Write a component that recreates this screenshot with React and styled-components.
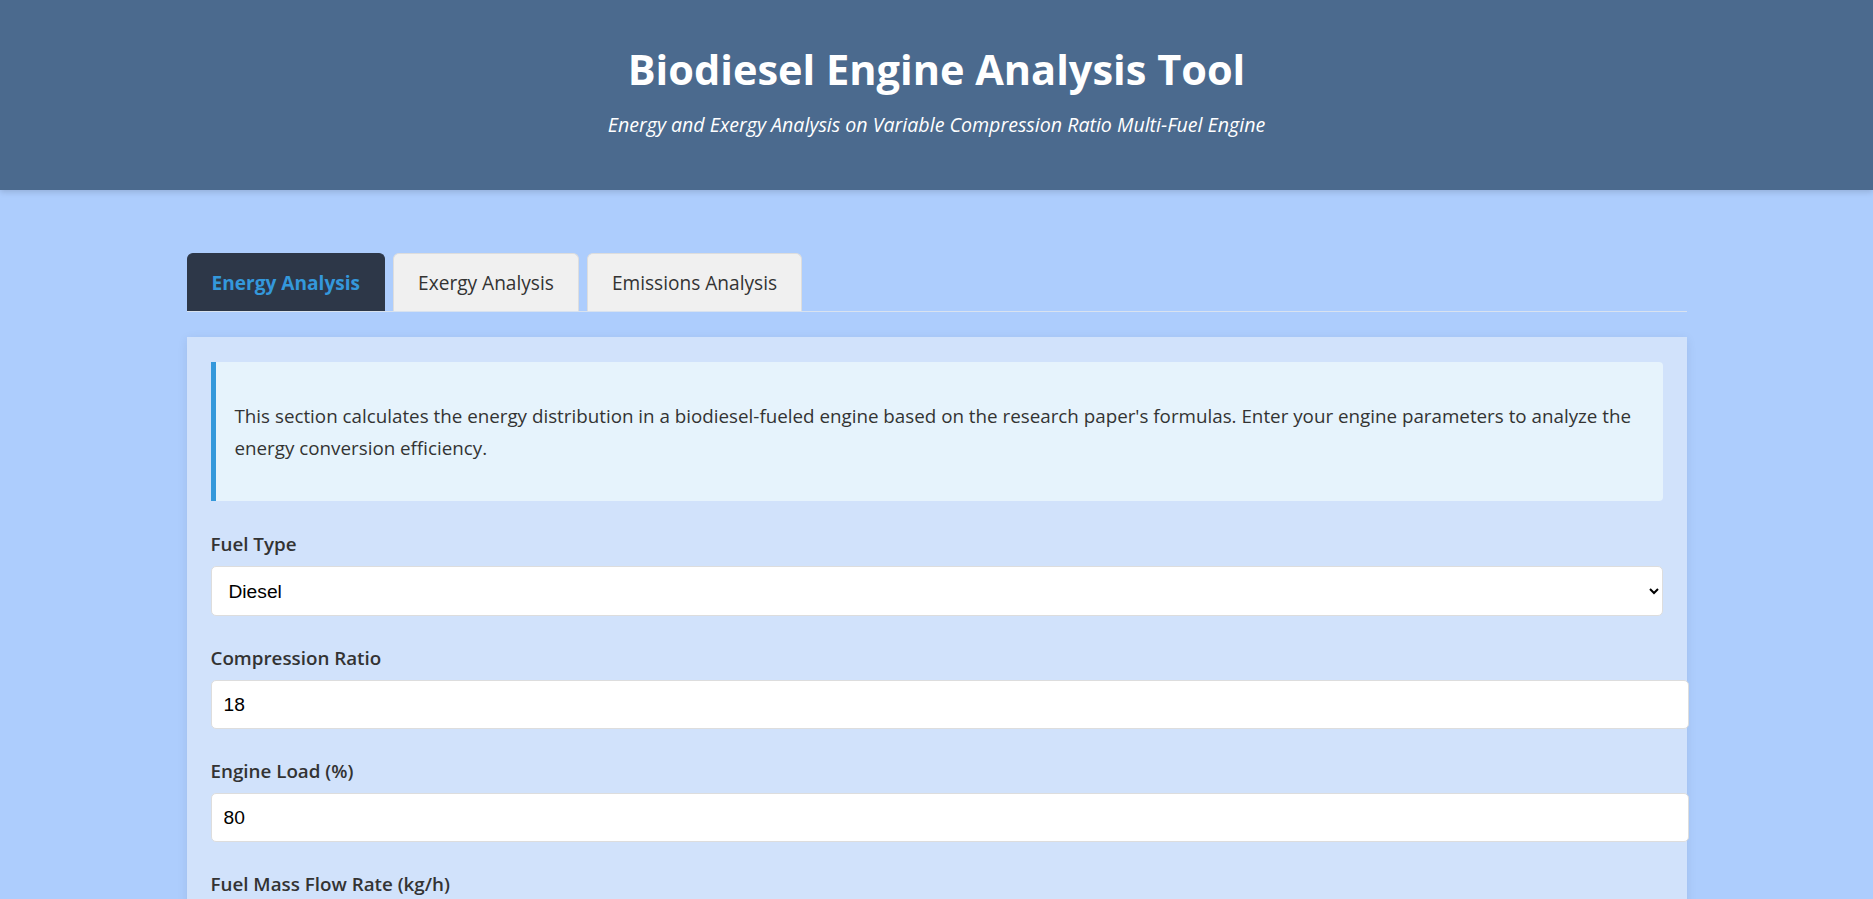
import React, { useState } from 'react';
import styled, { createGlobalStyle } from 'styled-components';

const GlobalStyle = createGlobalStyle`
  html, body {
    margin: 0;
    padding: 0;
  }
  body {
    background-color: #adcdfd;
    font-family: "Open Sans", "Noto Sans", sans-serif;
    color: #333;
  }
`;

const Header = styled.header`
  background-color: #4b6a8e;
  color: #fff;
  text-align: center;
  padding: 44px 20px 51px;
  box-shadow: 0 2px 6px rgba(0, 0, 0, 0.15);
  position: relative;
`;

const Title = styled.h1`
  margin: 0 0 17px;
  font-size: 41.5px;
  line-height: 50px;
  font-weight: 700;
`;

const Subtitle = styled.p`
  margin: 0;
  font-size: 19.6px;
  line-height: 28px;
  font-style: italic;
`;

const Main = styled.main`
  max-width: 1500px;
  margin: 63px auto 0;
`;

const TabBar = styled.nav`
  display: flex;
  gap: 8px;
  border-bottom: 1px solid #d8e2ef;
`;

const Tab = styled.button`
  height: 58px;
  padding: 0 24px;
  font-family: inherit;
  font-size: 19.1px;
  font-weight: ${p => (p.active ? 700 : 400)};
  color: ${p => (p.active ? '#3498db' : '#333')};
  background-color: ${p => (p.active ? '#2d3748' : '#f0f0f0')};
  border: 1px solid ${p => (p.active ? '#2d3748' : '#ddd')};
  border-bottom: none;
  border-radius: 6px 6px 0 0;
  cursor: pointer;
`;

const Card = styled.section`
  margin-top: 25px;
  background-color: #d1e2fb;
  padding: 25px 24px;
  box-shadow: 0 2px 10px rgba(0, 0, 0, 0.08);
  min-height: 700px;
`;

const InfoBox = styled.div`
  background-color: #e6f3fc;
  border-left: 5px solid #3498db;
  border-radius: 0 4px 4px 0;
  padding: 20px 20px 20px 19px;
  margin-bottom: 30px;

  p {
    margin: 17.6px 0;
    font-size: 18.8px;
    line-height: 32px;
  }
`;

const Field = styled.div`
  margin-bottom: 29px;
`;

const Label = styled.label`
  display: block;
  font-size: 18.8px;
  line-height: 26px;
  font-weight: 600;
  margin-bottom: 9px;
`;

const Select = styled.select`
  width: 100%;
  height: 50px;
  padding: 0 13px;
  font-family: "Liberation Sans", Arial, sans-serif;
  font-size: 19.2px;
  color: #000;
  background-color: #fff;
  border: 1px solid #ddd;
  border-radius: 5px;
`;

const Input = styled.input`
  display: block;
  width: 100%;
  padding: 12px;
  font-family: "Liberation Sans", Arial, sans-serif;
  font-size: 19.2px;
  line-height: 23px;
  color: #000;
  background-color: #fff;
  border: 1px solid #ddd;
  border-radius: 5px;
`;

const tabs = ['Energy Analysis', 'Exergy Analysis', 'Emissions Analysis'];

export default function App() {
  const [active, setActive] = useState(0);
  const [fuel, setFuel] = useState('diesel');
  const [ratio, setRatio] = useState('18');
  const [load, setLoad] = useState('80');
  const [flow, setFlow] = useState('');

  return (
    <>
      <GlobalStyle />
      <Header>
        <Title>Biodiesel Engine Analysis Tool</Title>
        <Subtitle>Energy and Exergy Analysis on Variable Compression Ratio Multi-Fuel Engine</Subtitle>
      </Header>
      <Main>
        <TabBar>
          {tabs.map((t, i) => (
            <Tab key={t} active={i === active} onClick={() => setActive(i)}>
              {t}
            </Tab>
          ))}
        </TabBar>
        <Card>
          <InfoBox>
            <p>
              This section calculates the energy distribution in a biodiesel-fueled engine based on the
              research paper's formulas. Enter your engine parameters to analyze the energy conversion
              efficiency.
            </p>
          </InfoBox>
          <Field>
            <Label>Fuel Type</Label>
            <Select value={fuel} onChange={e => setFuel(e.target.value)}>
              <option value="diesel">Diesel</option>
              <option value="b20">B20</option>
              <option value="b100">B100</option>
            </Select>
          </Field>
          <Field>
            <Label>Compression Ratio</Label>
            <Input type="number" value={ratio} onChange={e => setRatio(e.target.value)} />
          </Field>
          <Field>
            <Label>Engine Load (%)</Label>
            <Input type="number" value={load} onChange={e => setLoad(e.target.value)} />
          </Field>
          <Field>
            <Label>Fuel Mass Flow Rate (kg/h)</Label>
            <Input type="number" value={flow} onChange={e => setFlow(e.target.value)} />
          </Field>
        </Card>
      </Main>
    </>
  );
}
